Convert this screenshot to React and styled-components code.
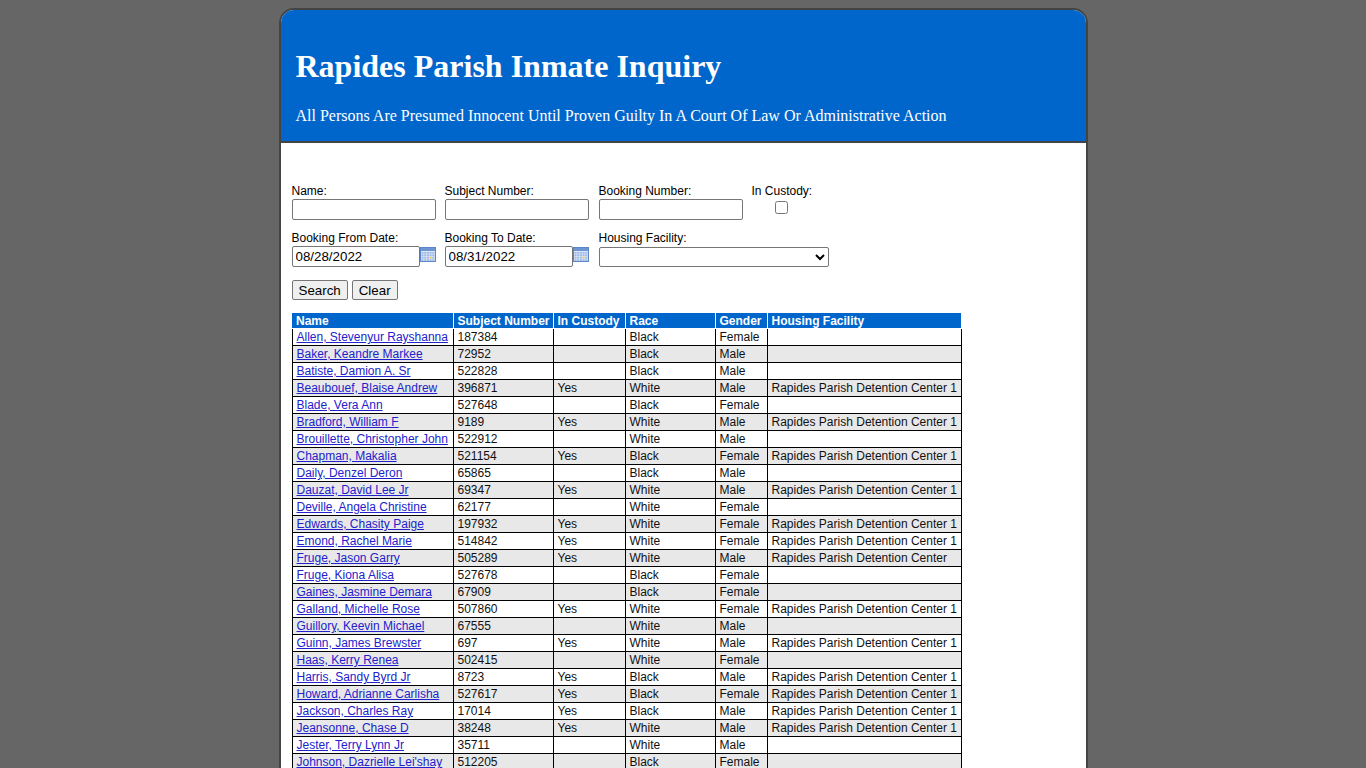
import React from 'react';
import styled, { createGlobalStyle } from 'styled-components';

const GlobalStyle = createGlobalStyle`
  html, body {
    margin: 0;
    background: #666666;
  }
  body {
    font-family: "Liberation Sans", Arial, sans-serif;
    font-size: 12px;
  }
`;

const Page = styled.div`
  padding-top: 8px;
`;

const Frame = styled.div`
  width: 805px;
  margin: 0 auto;
  border: 2px solid #444444;
  border-radius: 15px 15px 0 0;
  background: #ffffff;
  overflow: hidden;
`;

const Banner = styled.div`
  background: #0066cc;
  color: #ffffff;
  padding: 38px 15px 16px;
  border-bottom: 2px solid #444444;
  font-family: "Liberation Serif", "Times New Roman", serif;
`;

const Title = styled.h1`
  margin: 0 0 22px;
  font-size: 32px;
  line-height: 37px;
  font-weight: bold;
`;

const Notice = styled.div`
  font-size: 16px;
  line-height: 18px;
`;

const Content = styled.div`
  padding: 41px 11px 40px;
`;

const FormRow = styled.div`
  display: flex;
  align-items: flex-start;
  margin-bottom: ${(p) => p.$gap || 11}px;
`;

const Field = styled.div`
  width: ${(p) => p.$w || 153}px;
  flex-shrink: 0;
  text-align: ${(p) => (p.$center ? 'center' : 'left')};
  ${(p) => p.$center && 'width: auto;'}
`;

const Label = styled.div`
  font-size: 12px;
  line-height: 14px;
  color: #000;
`;

const TextBox = styled.input`
  box-sizing: border-box;
  width: ${(p) => p.$w || 144}px;
  height: 21px;
  margin: 1px 0 0;
  padding: 1px 3px;
  border: 1px solid #767676;
  border-radius: 2px;
  font-family: "Liberation Sans", Arial, sans-serif;
  font-size: 13.33px;
  color: #000;
  background: #fff;
`;

const DateWrap = styled.div`
  display: flex;
  align-items: flex-start;
`;

const IconSlot = styled.span`
  display: block;
  margin-top: 1px;
`;

const Check = styled.input`
  width: 13px;
  height: 13px;
  margin: 3px 0 0;
`;

const Select = styled.select`
  box-sizing: border-box;
  width: 230px;
  height: 20px;
  margin: 2px 0 0;
  border: 1px solid #767676;
  border-radius: 2px;
  background: #fff;
  font-family: "Liberation Sans", Arial, sans-serif;
  font-size: 13px;
`;

const Buttons = styled.div`
  display: flex;
  gap: 4px;
  margin-bottom: 13px;
`;

const Button = styled.button`
  box-sizing: border-box;
  height: 20px;
  padding: 0 6px;
  border: 1px solid #767676;
  border-radius: 2px;
  background: #efefef;
  font-family: "Liberation Sans", Arial, sans-serif;
  font-size: 13.33px;
  color: #000;
`;

const Results = styled.table`
  border-collapse: collapse;
  table-layout: fixed;
  width: 669px;
  font-size: 12px;
`;

const Head = styled.th`
  background: #0066cc;
  color: #ffffff;
  font-weight: bold;
  text-align: left;
  padding: 1px 4px 0;
  line-height: 14px;
  border: 1px solid #ffffff;
  border-top: none;
  &:first-child { border-left: none; }
  &:last-child { border-right: none; }
  white-space: nowrap;
`;

const Row = styled.tr`
  background: ${(p) => (p.$alt ? '#e8e8e8' : '#ffffff')};
`;

const Cell = styled.td`
  padding: 1px 4px 1px;
  line-height: 14px;
  border: 1px solid #000000;
  color: #111;
  white-space: nowrap;
  overflow: hidden;
`;

const NameLink = styled.a`
  color: #2222cc;
  text-decoration: underline;
`;

function CalendarIcon() {
  return (
    <svg width="16" height="16" viewBox="0 0 16 16" style={{ display: 'block' }}>
      <rect x="0.5" y="1.5" width="15" height="14" fill="#dbe6f7" stroke="#5d86c9" />
      <rect x="1" y="2" width="14" height="3" fill="#6d95d6" />
      {[0, 1, 2, 3].map((r) =>
        [0, 1, 2, 3, 4].map((c) => (
          <rect
            key={`${r}-${c}`}
            x={1.5 + c * 2.7}
            y={6 + r * 2.4}
            width="2"
            height="1.7"
            fill={r === 2 && c === 3 ? '#f2c94c' : '#9db8e6'}
          />
        ))
      )}
    </svg>
  );
}

const RPDC = 'Rapides Parish Detention Center 1';

const inmates = [
  ['Allen, Stevenyur Rayshanna', '187384', '', 'Black', 'Female', ''],
  ['Baker, Keandre Markee', '72952', '', 'Black', 'Male', ''],
  ['Batiste, Damion A. Sr', '522828', '', 'Black', 'Male', ''],
  ['Beaubouef, Blaise Andrew', '396871', 'Yes', 'White', 'Male', RPDC],
  ['Blade, Vera Ann', '527648', '', 'Black', 'Female', ''],
  ['Bradford, William F', '9189', 'Yes', 'White', 'Male', RPDC],
  ['Brouillette, Christopher John', '522912', '', 'White', 'Male', ''],
  ['Chapman, Makalia', '521154', 'Yes', 'Black', 'Female', RPDC],
  ['Daily, Denzel Deron', '65865', '', 'Black', 'Male', ''],
  ['Dauzat, David Lee Jr', '69347', 'Yes', 'White', 'Male', RPDC],
  ['Deville, Angela Christine', '62177', '', 'White', 'Female', ''],
  ['Edwards, Chasity Paige', '197932', 'Yes', 'White', 'Female', RPDC],
  ['Emond, Rachel Marie', '514842', 'Yes', 'White', 'Female', RPDC],
  ['Fruge, Jason Garry', '505289', 'Yes', 'White', 'Male', 'Rapides Parish Detention Center'],
  ['Fruge, Kiona Alisa', '527678', '', 'Black', 'Female', ''],
  ['Gaines, Jasmine Demara', '67909', '', 'Black', 'Female', ''],
  ['Galland, Michelle Rose', '507860', 'Yes', 'White', 'Female', RPDC],
  ['Guillory, Keevin Michael', '67555', '', 'White', 'Male', ''],
  ['Guinn, James Brewster', '697', 'Yes', 'White', 'Male', RPDC],
  ['Haas, Kerry Renea', '502415', '', 'White', 'Female', ''],
  ['Harris, Sandy Byrd Jr', '8723', 'Yes', 'Black', 'Male', RPDC],
  ['Howard, Adrianne Carlisha', '527617', 'Yes', 'Black', 'Female', RPDC],
  ['Jackson, Charles Ray', '17014', 'Yes', 'Black', 'Male', RPDC],
  ['Jeansonne, Chase D', '38248', 'Yes', 'White', 'Male', RPDC],
  ['Jester, Terry Lynn Jr', '35711', '', 'White', 'Male', ''],
  ["Johnson, Dazrielle Lei'shay", '512205', '', 'Black', 'Female', ''],
];

const columns = [
  ['Name', 161],
  ['Subject Number', 100],
  ['In Custody', 72],
  ['Race', 90],
  ['Gender', 52],
  ['Housing Facility', 194],
];

export default function App() {
  return (
    <Page>
      <GlobalStyle />
      <Frame>
        <Banner>
          <Title>Rapides Parish Inmate Inquiry</Title>
          <Notice>
            All Persons Are Presumed Innocent Until Proven Guilty In A Court Of Law Or Administrative Action
          </Notice>
        </Banner>

        <Content>
          <FormRow>
            <Field>
              <Label>Name:</Label>
              <TextBox type="text" />
            </Field>
            <Field $w={154}>
              <Label>Subject Number:</Label>
              <TextBox type="text" />
            </Field>
            <Field>
              <Label>Booking Number:</Label>
              <TextBox type="text" />
            </Field>
            <Field $center>
              <Label>In Custody:</Label>
              <Check type="checkbox" />
            </Field>
          </FormRow>

          <FormRow $gap={13}>
            <Field>
              <Label>Booking From Date:</Label>
              <DateWrap>
                <TextBox type="text" $w={128} defaultValue="08/28/2022" />
                <IconSlot>
                  <CalendarIcon />
                </IconSlot>
              </DateWrap>
            </Field>
            <Field $w={154}>
              <Label>Booking To Date:</Label>
              <DateWrap>
                <TextBox type="text" $w={128} defaultValue="08/31/2022" />
                <IconSlot>
                  <CalendarIcon />
                </IconSlot>
              </DateWrap>
            </Field>
            <Field $w={240}>
              <Label>Housing Facility:</Label>
              <Select defaultValue="">
                <option value=""></option>
                <option>Rapides Parish Detention Center 1</option>
              </Select>
            </Field>
          </FormRow>

          <Buttons>
            <Button>Search</Button>
            <Button>Clear</Button>
          </Buttons>

          <Results>
            <colgroup>
              {columns.map(([name, w]) => (
                <col key={name} style={{ width: w }} />
              ))}
            </colgroup>
            <thead>
              <tr>
                {columns.map(([name]) => (
                  <Head key={name}>{name}</Head>
                ))}
              </tr>
            </thead>
            <tbody>
              {inmates.map((r, i) => (
                <Row key={r[0]} $alt={i % 2 === 1}>
                  <Cell>
                    <NameLink href="#">{r[0]}</NameLink>
                  </Cell>
                  <Cell>{r[1]}</Cell>
                  <Cell>{r[2]}</Cell>
                  <Cell>{r[3]}</Cell>
                  <Cell>{r[4]}</Cell>
                  <Cell>{r[5]}</Cell>
                </Row>
              ))}
            </tbody>
          </Results>
        </Content>
      </Frame>
    </Page>
  );
}
